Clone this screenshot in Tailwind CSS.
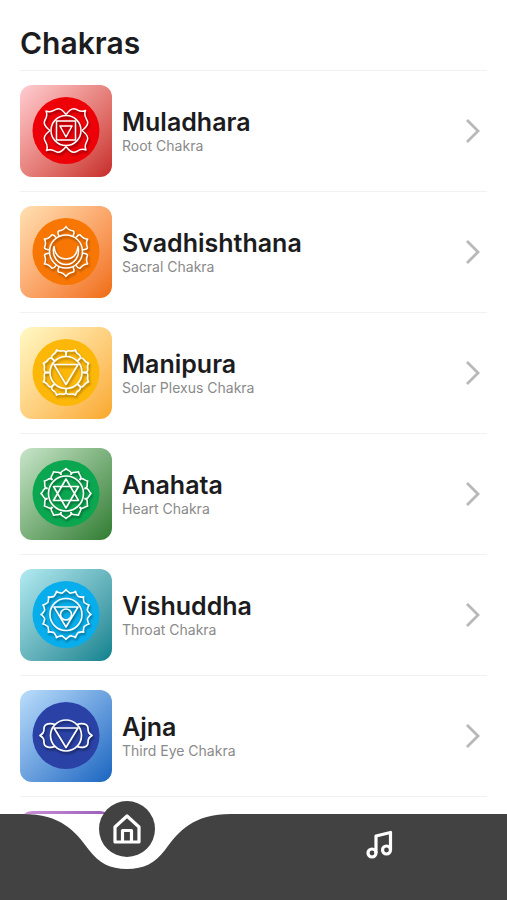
<!DOCTYPE html>
<html lang="en">
  <head>
    <meta charset="UTF-8" />
    <meta name="viewport" content="width=device-width, initial-scale=1.0" />
    <title>Chakras</title>
    <script src="https://cdn.jsdelivr.net/npm/@tailwindcss/browser@4"></script>
  </head>

  <body class="h-screen flex flex-col overflow-hidden bg-white text-[#1c1c1e] font-['Inter',sans-serif]">
    <!-- Shared shapes -->
    <svg class="hidden" aria-hidden="true">
      <defs>
        <path id="petal-4" d="M0 -16C-3 -20 -6 -22.500 -9 -21.500C-12 -21 -14 -17 -20 -19.500C-17.500 -14 -21 -12 -21.500 -9C-22.500 -6 -20 -3 -16 0" />
        <path id="petal-6" d="M-7 -15.500C-8 -17.500 -8.500 -19.500 -7.500 -20.500C-4.500 -21 -1.500 -22 0 -25C1.500 -22 4.500 -21 7.500 -20.500C8.500 -19.500 8 -17.500 7 -15.500" />
        <path id="petal-8" d="M-6.200 -15.500C-8.500 -18.500 -8 -20.500 -5.500 -21.300C-3 -21.800 -1 -22.500 0 -24.500C1 -22.500 3 -21.800 5.500 -21.300C8 -20.500 8.500 -18.500 6.200 -15.500" />
        <path id="petal-12" d="M-5 -18.500C-7 -22.500 -2 -22.300 0 -25C2 -22.300 7 -22.500 5 -18.500" />
        <path id="petal-16" d="M-4.200 -21C-3 -22.800 -1.200 -22.500 0 -25C1.200 -22.500 3 -22.800 4.200 -21" />
        <path id="chevron" d="M2 2L13 13L2 24" />
      </defs>
    </svg>

    <main class="flex-1 min-h-0 overflow-y-auto px-5 [scrollbar-width:none]">
      <h1 class="pt-6 pb-2 text-[30px] leading-[38px] font-semibold">Chakras</h1>

      <ul>
        <li class="border-t border-[#f1f1f1]">
          <a href="#muladhara" class="flex items-center gap-[10px] py-[14px] pr-[6px]">
            <span class="size-[92px] shrink-0 rounded-[12px] bg-linear-to-br from-[#ffcdd2] to-[#c62828]">
              <svg viewBox="-46 -45.500 92 92" fill="none" stroke="#fff" stroke-width="1.500" stroke-linejoin="round" aria-hidden="true">
                <circle r="33.500" fill="#ee0009" stroke="none" />
                <g class="drop-shadow-[1px_2px_1px_rgba(0,0,0,0.45)]">
                  <use href="#petal-4" />
                  <use href="#petal-4" transform="rotate(90)" />
                  <use href="#petal-4" transform="rotate(180)" />
                  <use href="#petal-4" transform="rotate(270)" />
                  <circle r="15" />
                  <path d="M-9.500 -9.500H9.500V9.500H-9.500ZM-6 -4.500H6L0 6.500Z" />
                </g>
              </svg>
            </span>
            <span class="flex-1">
              <span class="block text-[25px] leading-[30px] font-semibold">Muladhara</span>
              <span class="block text-sm leading-[18px] text-[#8a8a8a]">Root Chakra</span>
            </span>
            <svg class="w-[16px] h-[26px]" viewBox="0 0 16 26" fill="none" stroke="#b8b8b8" stroke-width="2.800" aria-hidden="true"><use href="#chevron" /></svg>
          </a>
        </li>

        <li class="border-t border-[#f1f1f1]">
          <a href="#svadhishthana" class="flex items-center gap-[10px] py-[14px] pr-[6px]">
            <span class="size-[92px] shrink-0 rounded-[12px] bg-linear-to-br from-[#ffe0b2] to-[#ef6c00]">
              <svg viewBox="-46 -45.500 92 92" fill="none" stroke="#fff" stroke-width="1.500" stroke-linejoin="round" aria-hidden="true">
                <circle r="33.500" fill="#f77604" stroke="none" />
                <g class="drop-shadow-[1px_2px_1px_rgba(0,0,0,0.35)]">
                  <use href="#petal-6" />
                  <use href="#petal-6" transform="rotate(60)" />
                  <use href="#petal-6" transform="rotate(120)" />
                  <use href="#petal-6" transform="rotate(180)" />
                  <use href="#petal-6" transform="rotate(240)" />
                  <use href="#petal-6" transform="rotate(300)" />
                  <circle r="16.500" />
                  <path d="M-12 -5C-14.500 5 -8 13 0 13C8 13 14.500 5 12 -5C11 3 7 7.500 0 7.500C-7 7.500 -11 3 -12 -5Z" />
                </g>
              </svg>
            </span>
            <span class="flex-1">
              <span class="block text-[25px] leading-[30px] font-semibold">Svadhishthana</span>
              <span class="block text-sm leading-[18px] text-[#8a8a8a]">Sacral Chakra</span>
            </span>
            <svg class="w-[16px] h-[26px]" viewBox="0 0 16 26" fill="none" stroke="#b8b8b8" stroke-width="2.800" aria-hidden="true"><use href="#chevron" /></svg>
          </a>
        </li>

        <li class="border-t border-[#f1f1f1]">
          <a href="#manipura" class="flex items-center gap-[10px] py-[14px] pr-[6px]">
            <span class="size-[92px] shrink-0 rounded-[12px] bg-linear-to-br from-[#fff9c4] to-[#f9a825]">
              <svg viewBox="-46 -45.500 92 92" fill="none" stroke="#fff" stroke-width="1.600" stroke-linejoin="round" aria-hidden="true">
                <circle r="33.500" fill="#fdb709" stroke="none" />
                <g class="drop-shadow-[1px_2px_1px_rgba(0,0,0,0.35)]">
                  <use href="#petal-8" transform="rotate(22.500)" />
                  <use href="#petal-8" transform="rotate(67.500)" />
                  <use href="#petal-8" transform="rotate(112.500)" />
                  <use href="#petal-8" transform="rotate(157.500)" />
                  <use href="#petal-8" transform="rotate(202.500)" />
                  <use href="#petal-8" transform="rotate(247.500)" />
                  <use href="#petal-8" transform="rotate(292.500)" />
                  <use href="#petal-8" transform="rotate(337.500)" />
                  <circle r="16" />
                  <path d="M-12 -8H12L0 12Z" />
                </g>
              </svg>
            </span>
            <span class="flex-1">
              <span class="block text-[25px] leading-[30px] font-semibold">Manipura</span>
              <span class="block text-sm leading-[18px] text-[#8a8a8a]">Solar Plexus Chakra</span>
            </span>
            <svg class="w-[16px] h-[26px]" viewBox="0 0 16 26" fill="none" stroke="#b8b8b8" stroke-width="2.800" aria-hidden="true"><use href="#chevron" /></svg>
          </a>
        </li>

        <li class="border-t border-[#f1f1f1]">
          <a href="#anahata" class="flex items-center gap-[10px] py-[14px] pr-[6px]">
            <span class="size-[92px] shrink-0 rounded-[12px] bg-linear-to-br from-[#c8e6c9] to-[#2e7d32]">
              <svg viewBox="-46 -45.500 92 92" fill="none" stroke="#fff" stroke-width="1.600" stroke-linejoin="round" aria-hidden="true">
                <circle r="33.500" fill="#0ba750" stroke="none" />
                <g class="drop-shadow-[1px_2px_1px_rgba(0,0,0,0.4)]">
                  <use href="#petal-12" />
                  <use href="#petal-12" transform="rotate(30)" />
                  <use href="#petal-12" transform="rotate(60)" />
                  <use href="#petal-12" transform="rotate(90)" />
                  <use href="#petal-12" transform="rotate(120)" />
                  <use href="#petal-12" transform="rotate(150)" />
                  <use href="#petal-12" transform="rotate(180)" />
                  <use href="#petal-12" transform="rotate(210)" />
                  <use href="#petal-12" transform="rotate(240)" />
                  <use href="#petal-12" transform="rotate(270)" />
                  <use href="#petal-12" transform="rotate(300)" />
                  <use href="#petal-12" transform="rotate(330)" />
                  <circle r="17.500" />
                  <path d="M-12.500 -7H12.500L0 14.500ZM-12.500 7H12.500L0 -14.500Z" />
                </g>
              </svg>
            </span>
            <span class="flex-1">
              <span class="block text-[25px] leading-[30px] font-semibold">Anahata</span>
              <span class="block text-sm leading-[18px] text-[#8a8a8a]">Heart Chakra</span>
            </span>
            <svg class="w-[16px] h-[26px]" viewBox="0 0 16 26" fill="none" stroke="#b8b8b8" stroke-width="2.800" aria-hidden="true"><use href="#chevron" /></svg>
          </a>
        </li>

        <li class="border-t border-[#f1f1f1]">
          <a href="#vishuddha" class="flex items-center gap-[10px] py-[14px] pr-[6px]">
            <span class="size-[92px] shrink-0 rounded-[12px] bg-linear-to-br from-[#b2ebf2] to-[#00838f]">
              <svg viewBox="-46 -45.500 92 92" fill="none" stroke="#fff" stroke-width="1.600" stroke-linejoin="round" aria-hidden="true">
                <circle r="33.500" fill="#08aeeb" stroke="none" />
                <g class="drop-shadow-[1px_2px_1px_rgba(0,0,0,0.4)]">
                  <use href="#petal-16" />
                  <use href="#petal-16" transform="rotate(22.500)" />
                  <use href="#petal-16" transform="rotate(45)" />
                  <use href="#petal-16" transform="rotate(67.500)" />
                  <use href="#petal-16" transform="rotate(90)" />
                  <use href="#petal-16" transform="rotate(112.500)" />
                  <use href="#petal-16" transform="rotate(135)" />
                  <use href="#petal-16" transform="rotate(157.500)" />
                  <use href="#petal-16" transform="rotate(180)" />
                  <use href="#petal-16" transform="rotate(202.500)" />
                  <use href="#petal-16" transform="rotate(225)" />
                  <use href="#petal-16" transform="rotate(247.500)" />
                  <use href="#petal-16" transform="rotate(270)" />
                  <use href="#petal-16" transform="rotate(292.500)" />
                  <use href="#petal-16" transform="rotate(315)" />
                  <use href="#petal-16" transform="rotate(337.500)" />
                  <circle r="16" />
                  <circle r="5.500" />
                  <path d="M-12 -7.500H12L0 12.500Z" />
                </g>
              </svg>
            </span>
            <span class="flex-1">
              <span class="block text-[25px] leading-[30px] font-semibold">Vishuddha</span>
              <span class="block text-sm leading-[18px] text-[#8a8a8a]">Throat Chakra</span>
            </span>
            <svg class="w-[16px] h-[26px]" viewBox="0 0 16 26" fill="none" stroke="#b8b8b8" stroke-width="2.800" aria-hidden="true"><use href="#chevron" /></svg>
          </a>
        </li>

        <li class="border-t border-[#f1f1f1]">
          <a href="#ajna" class="flex items-center gap-[10px] py-[14px] pr-[6px]">
            <span class="size-[92px] shrink-0 rounded-[12px] bg-linear-to-br from-[#bbdefb] to-[#1565c0]">
              <svg viewBox="-46 -45.500 92 92" fill="none" stroke="#fff" stroke-width="1.700" stroke-linejoin="round" aria-hidden="true">
                <circle r="33.500" fill="#2a42a6" stroke="none" />
                <g class="drop-shadow-[1px_2px_1px_rgba(0,0,0,0.5)]">
                  <circle r="15.500" />
                  <path d="M-12 -7.500H12L0 12Z" />
                  <path d="M-11 -11C-15 -12.500 -22 -12.500 -22 -7C-22 -3 -23 -2 -26 0C-23 2 -22 3 -22 7C-22 12.500 -15 12.500 -11 11" />
                  <path d="M11 -11C15 -12.500 22 -12.500 22 -7C22 -3 23 -2 26 0C23 2 22 3 22 7C22 12.500 15 12.500 11 11" />
                </g>
              </svg>
            </span>
            <span class="flex-1">
              <span class="block text-[25px] leading-[30px] font-semibold">Ajna</span>
              <span class="block text-sm leading-[18px] text-[#8a8a8a]">Third Eye Chakra</span>
            </span>
            <svg class="w-[16px] h-[26px]" viewBox="0 0 16 26" fill="none" stroke="#b8b8b8" stroke-width="2.800" aria-hidden="true"><use href="#chevron" /></svg>
          </a>
        </li>

        <li class="border-t border-[#f1f1f1]">
          <a href="#sahasrara" class="flex items-center py-[14px]" aria-label="Next chakra">
            <span class="size-[92px] shrink-0 rounded-[12px] bg-linear-to-br from-[#ce93d8] to-[#6a1b9a]"></span>
          </a>
        </li>
      </ul>
    </main>

    <nav class="relative flex h-[86px] shrink-0 bg-[#424242] text-white">
      <div class="relative flex-1 flex justify-center">
        <svg class="h-[56px] w-[208px] shrink-0" viewBox="0 0 208 56" fill="#fff" aria-hidden="true">
          <path d="M0 0C38 0 52 17 66 36C76 49 87 55 104 55C121 55 132 49 142 36C156 17 170 0 208 0Z" />
        </svg>
        <button type="button" aria-label="Home" class="absolute -top-[13px] size-[56px] rounded-full bg-[#424242] flex items-center justify-center">
          <svg class="size-[32px]" viewBox="0 0 32 32" fill="none" stroke="currentColor" stroke-width="3.200" stroke-linejoin="round" aria-hidden="true">
            <path d="M16 3L28 14V29H4V14ZM11.500 29V17.500H20.500V29" />
          </svg>
        </button>
      </div>
      <button type="button" aria-label="Music" class="flex-1 flex justify-center pt-[15px]">
        <svg class="size-[30px]" viewBox="0 0 30 30" fill="none" stroke="currentColor" stroke-width="3.200" stroke-linejoin="round" aria-hidden="true">
          <path d="M11 24V7L25.500 3.500V21" />
          <circle cx="7" cy="24" r="4" />
          <circle cx="21.500" cy="21" r="4" />
        </svg>
      </button>
    </nav>
  </body>
</html>
